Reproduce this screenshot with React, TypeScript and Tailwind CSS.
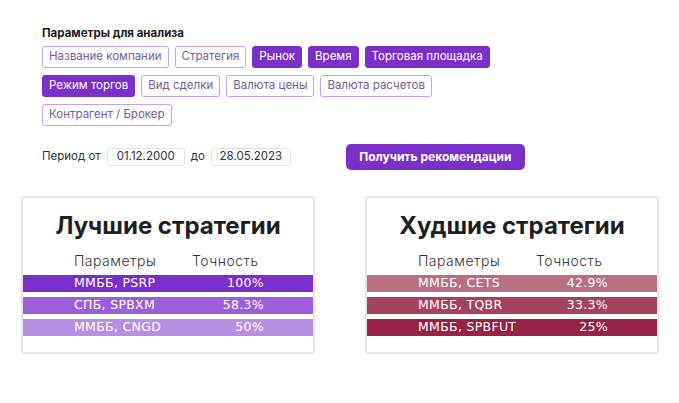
import React from "react";

const chips: { label: string; active: boolean }[][] = [
  [
    { label: "Название компании", active: false },
    { label: "Стратегия", active: false },
    { label: "Рынок", active: true },
    { label: "Время", active: true },
    { label: "Торговая площадка", active: true },
  ],
  [
    { label: "Режим торгов", active: true },
    { label: "Вид сделки", active: false },
    { label: "Валюта цены", active: false },
    { label: "Валюта расчетов", active: false },
  ],
  [{ label: "Контрагент / Брокер", active: false }],
];

function Chip({ label, active }: { label: string; active: boolean }) {
  return (
    <div
      className={
        active
          ? "h-[22px] px-[6px] flex items-center rounded-[3px] border border-[#7b2fc9] bg-[#7b2fc9] text-white text-[11.5px]"
          : "h-[22px] px-[6px] flex items-center rounded-[3px] border border-[#c6a4ec] bg-white text-[#75609a] text-[11.5px]"
      }
    >
      {label}
    </div>
  );
}

type Row = { p: string; v: string; bg: string };

function Card({ title, rows }: { title: string; rows: Row[] }) {
  return (
    <div className="w-[294px] h-[158px] border-2 border-[#e6e6e6] rounded-[4px] bg-white flex flex-col">
      <div className="text-[24px] font-bold text-[#1f1f1f] text-center mt-[12px] leading-[32px]">{title}</div>
      <div className="flex mt-[10px] text-[14px] tracking-[0.5px] text-[#333] font-light leading-[18px]">
        <div className="w-[51px]" />
        <div className="w-[118px]">Параметры</div>
        <div className="w-[74px] whitespace-nowrap">Точность</div>
      </div>
      <div className="flex flex-col gap-[5px] mt-[5px]">
        {rows.map((r) => (
          <div
            key={r.p}
            className={"h-[17px] flex items-center text-white text-[12.5px] tracking-[0.3px] " + r.bg}
            style={{ fontFamily: "'DejaVu Sans', Inter, sans-serif" }}
          >
            <div className="w-[51px]" />
            <div className="w-[140px] whitespace-nowrap">{r.p}</div>
            <div className="w-[50px] text-right whitespace-nowrap">{r.v}</div>
          </div>
        ))}
      </div>
    </div>
  );
}

export default function App() {
  return (
    <div
      className="w-[679px] h-[403px] bg-white text-[#222]"
      style={{ fontFamily: "Inter, 'Noto Sans', sans-serif" }}
    >
      <div className="pl-[42px] pt-[26px]">
        <div className="text-[11.5px] font-bold text-[#1a1a1a] leading-[14px]">Параметры для анализа</div>
        <div className="flex flex-col gap-[7px] mt-[6px]">
          {chips.map((row, i) => (
            <div key={i} className="flex gap-[6px]">
              {row.map((c) => (
                <Chip key={c.label} {...c} />
              ))}
            </div>
          ))}
        </div>
        <div className="flex items-center mt-[18px] text-[11.5px] text-[#333]">
          <span>Период от</span>
          <div className="ml-[6px] w-[78px] h-[18px] border border-[#e3e3e3] rounded-[3px] flex items-center justify-center">01.12.2000</div>
          <span className="ml-[6px]">до</span>
          <div className="ml-[6px] w-[80px] h-[18px] border border-[#e3e3e3] rounded-[3px] flex items-center justify-center">28.05.2023</div>
          <button className="ml-[55px] w-[179px] h-[26px] rounded-[5px] bg-[#7b2fc9] text-white font-bold text-[12px]">
            Получить рекомендации
          </button>
        </div>
      </div>
      <div className="flex gap-[50px] pl-[21px] mt-[26px]">
        <Card
          title="Лучшие стратегии"
          rows={[
            { p: "ММББ, PSRP", v: "100%", bg: "bg-[#7b2fc9]" },
            { p: "СПБ, SPBXM", v: "58.3%", bg: "bg-[#9c5fd9]" },
            { p: "ММББ, CNGD", v: "50%", bg: "bg-[#b78ee4]" },
          ]}
        />
        <Card
          title="Худшие стратегии"
          rows={[
            { p: "ММББ, CETS", v: "42.9%", bg: "bg-[#b86f82]" },
            { p: "ММББ, TQBR", v: "33.3%", bg: "bg-[#a5435f]" },
            { p: "ММББ, SPBFUT", v: "25%", bg: "bg-[#962346]" },
          ]}
        />
      </div>
    </div>
  );
}
